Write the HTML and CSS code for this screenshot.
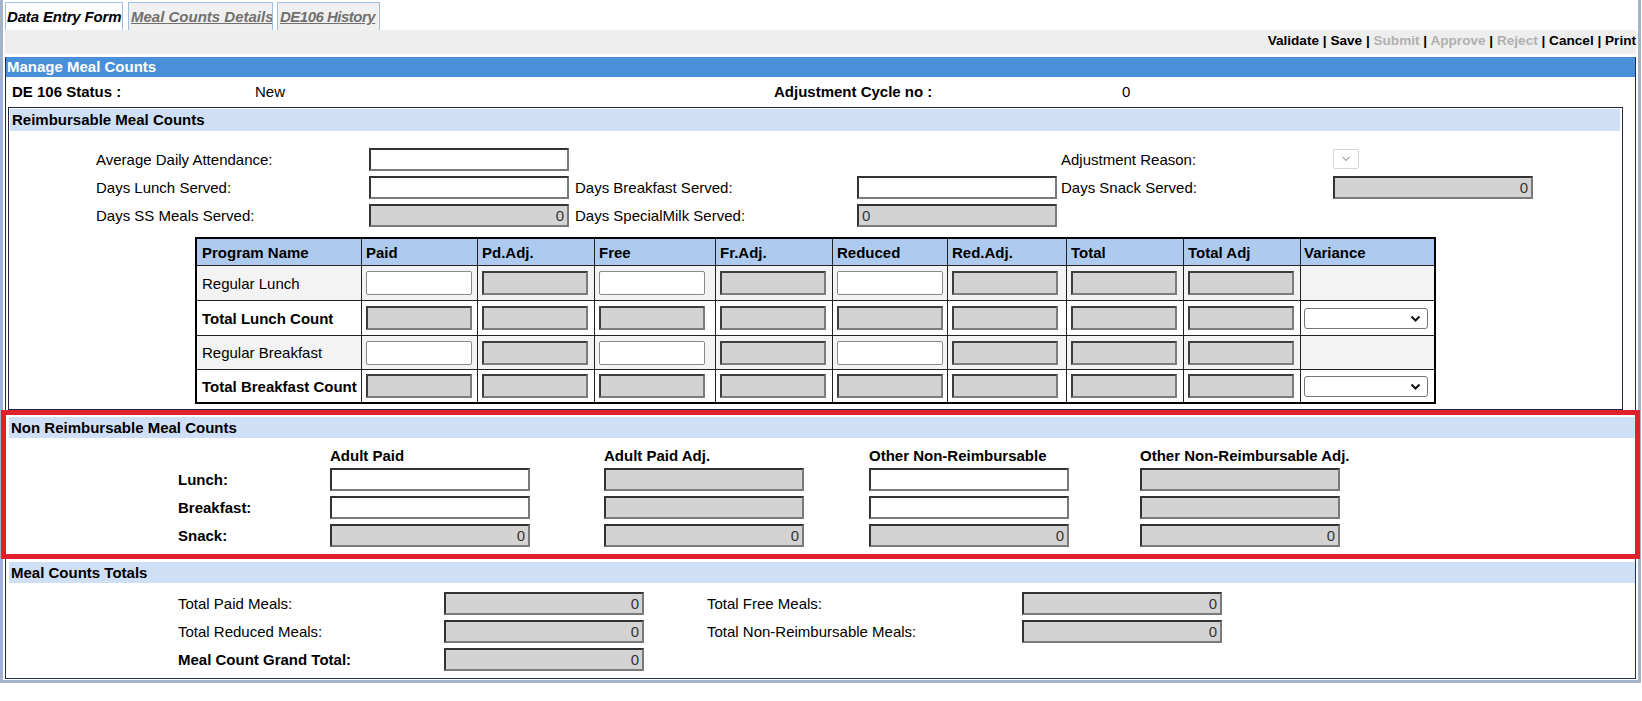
FILE: index.html
```html
<!DOCTYPE html>
<html>
<head>
<meta charset="utf-8">
<title>Manage Meal Counts</title>
<link rel="stylesheet" href="styles.css">
</head>
<body>
<div class="frame">
  <div class="tabs">
    <div class="tab active t1">Data Entry Form</div>
    <div class="tab t2">Meal Counts Details</div>
    <div class="tab t3">DE106 History</div>
  </div>
  <div class="toolbar"><span>Validate</span> | <span>Save</span> | <span class="dis">Submit</span> | <span class="dis">Approve</span> | <span class="dis">Reject</span> | <span>Cancel</span> | <span>Print</span></div>
  <div class="content">
    <div class="mainhead">Manage Meal Counts</div>
    <div class="status">
      <span class="b">DE 106 Status :</span>
      <span>New</span>
      <span class="b">Adjustment Cycle no :</span>
      <span>0</span>
    </div>

    <div class="box">
      <div class="sechead">Reimbursable Meal Counts</div>
      <div class="fields">
        <span>Average Daily Attendance:</span>
        <input class="in" type="text" value="">
        <span></span>
        <span></span>
        <span>Adjustment Reason:</span>
        <div class="minisel"><svg width="10" height="6" viewBox="0 0 10 6"><path d="M1.5 1 L5 4.5 L8.5 1" stroke="#a8a8a8" stroke-width="1.2" fill="none"/></svg></div>

        <span>Days Lunch Served:</span>
        <input class="in" type="text" value="">
        <span>Days Breakfast Served:</span>
        <input class="in" type="text" value="">
        <span>Days Snack Served:</span>
        <input class="in ro r" type="text" value="0" readonly>

        <span>Days SS Meals Served:</span>
        <input class="in ro r" type="text" value="0" readonly>
        <span>Days SpecialMilk Served:</span>
        <input class="in ro" type="text" value="0" readonly>
        <span></span>
        <span></span>
      </div>

      <table class="grid">
        <thead>
          <tr>
            <th>Program Name</th>
            <th>Paid</th>
            <th>Pd.Adj.</th>
            <th>Free</th>
            <th>Fr.Adj.</th>
            <th>Reduced</th>
            <th>Red.Adj.</th>
            <th>Total</th>
            <th>Total Adj</th>
            <th>Variance</th>
          </tr>
        </thead>
        <tbody>
          <tr class="alt">
            <td>Regular Lunch</td>
            <td><input class="ti" type="text"></td>
            <td><input class="ti ro" type="text" readonly></td>
            <td><input class="ti" type="text"></td>
            <td><input class="ti ro" type="text" readonly></td>
            <td><input class="ti" type="text"></td>
            <td><input class="ti ro" type="text" readonly></td>
            <td><input class="ti ro" type="text" readonly></td>
            <td><input class="ti ro" type="text" readonly></td>
            <td></td>
          </tr>
          <tr>
            <td class="b">Total Lunch Count</td>
            <td><input class="ti ro" type="text" readonly></td>
            <td><input class="ti ro" type="text" readonly></td>
            <td><input class="ti ro" type="text" readonly></td>
            <td><input class="ti ro" type="text" readonly></td>
            <td><input class="ti ro" type="text" readonly></td>
            <td><input class="ti ro" type="text" readonly></td>
            <td><input class="ti ro" type="text" readonly></td>
            <td><input class="ti ro" type="text" readonly></td>
            <td><div class="sel"><svg width="11" height="7" viewBox="0 0 11 7"><path d="M1.5 1.5 L5.5 5.5 L9.5 1.5" stroke="#111" stroke-width="2" fill="none"/></svg></div></td>
          </tr>
          <tr class="alt">
            <td>Regular Breakfast</td>
            <td><input class="ti" type="text"></td>
            <td><input class="ti ro" type="text" readonly></td>
            <td><input class="ti" type="text"></td>
            <td><input class="ti ro" type="text" readonly></td>
            <td><input class="ti" type="text"></td>
            <td><input class="ti ro" type="text" readonly></td>
            <td><input class="ti ro" type="text" readonly></td>
            <td><input class="ti ro" type="text" readonly></td>
            <td></td>
          </tr>
          <tr>
            <td class="b">Total Breakfast Count</td>
            <td><input class="ti ro" type="text" readonly></td>
            <td><input class="ti ro" type="text" readonly></td>
            <td><input class="ti ro" type="text" readonly></td>
            <td><input class="ti ro" type="text" readonly></td>
            <td><input class="ti ro" type="text" readonly></td>
            <td><input class="ti ro" type="text" readonly></td>
            <td><input class="ti ro" type="text" readonly></td>
            <td><input class="ti ro" type="text" readonly></td>
            <td><div class="sel"><svg width="11" height="7" viewBox="0 0 11 7"><path d="M1.5 1.5 L5.5 5.5 L9.5 1.5" stroke="#111" stroke-width="2" fill="none"/></svg></div></td>
          </tr>
        </tbody>
      </table>
    </div>

    <div class="sec nonreimb">
      <div class="sechead">Non Reimbursable Meal Counts</div>
      <div class="nrgrid">
        <span></span>
        <span class="b">Adult Paid</span>
        <span class="b">Adult Paid Adj.</span>
        <span class="b">Other Non-Reimbursable</span>
        <span class="b">Other Non-Reimbursable Adj.</span>

        <span class="b">Lunch:</span>
        <input class="in" type="text">
        <input class="in ro" type="text" readonly>
        <input class="in" type="text">
        <input class="in ro" type="text" readonly>

        <span class="b">Breakfast:</span>
        <input class="in" type="text">
        <input class="in ro" type="text" readonly>
        <input class="in" type="text">
        <input class="in ro" type="text" readonly>

        <span class="b">Snack:</span>
        <input class="in ro r" type="text" value="0" readonly>
        <input class="in ro r" type="text" value="0" readonly>
        <input class="in ro r" type="text" value="0" readonly>
        <input class="in ro r" type="text" value="0" readonly>
      </div>
    </div>

    <div class="sec totals">
      <div class="sechead">Meal Counts Totals</div>
      <div class="totgrid">
        <span>Total Paid Meals:</span>
        <input class="in ro r" type="text" value="0" readonly>
        <span>Total Free Meals:</span>
        <input class="in ro r" type="text" value="0" readonly>

        <span>Total Reduced Meals:</span>
        <input class="in ro r" type="text" value="0" readonly>
        <span>Total Non-Reimbursable Meals:</span>
        <input class="in ro r" type="text" value="0" readonly>

        <span class="b">Meal Count Grand Total:</span>
        <input class="in ro r" type="text" value="0" readonly>
        <span></span>
        <span></span>
      </div>
    </div>
  </div>
</div>
</body>
</html>
```

FILE: styles.css
```css
* { box-sizing: border-box; }

body {
  margin: 0;
  font-family: "Liberation Sans", Arial, sans-serif;
  font-size: 15px;
  color: #000;
  background: #fff;
}

.b { font-weight: bold; }

.frame {
  width: 1641px;
  border: 3px solid #a3b3c9;
  border-top: none;
  padding: 2px 2px 1px 2px;
}

/* tabs */
.tabs {
  display: flex;
  height: 28px;
}
.tab {
  height: 28px;
  line-height: 27px;
  padding: 0 0 0 2px;
  border: 1px solid #9fbfe2;
  border-bottom: none;
  background: #f0f0f0;
  color: #707070;
  font-weight: bold;
  font-style: italic;
  text-decoration: underline;
  white-space: nowrap;
  overflow: hidden;
}
.tab.active {
  background: #fff;
  color: #000;
  text-decoration: none;
  padding-left: 1px;
}
.tab.t1 { width: 118px; margin-right: 5px; letter-spacing: -0.15px; }
.tab.t2 { width: 145px; margin-right: 4px; }
.tab.t3 { width: 103px; letter-spacing: -0.5px; }

/* toolbar */
.toolbar {
  height: 24px;
  line-height: 22px;
  background: #eeeeee;
  text-align: right;
  font-weight: bold;
  font-size: 13.6px;
  white-space: nowrap;
}
.toolbar .dis { color: #b0b0b0; }

/* content */
.content {
  margin-top: 3px;
  border: 1px solid #1d2b5e;
  border-top: none;
}
.mainhead {
  background: #4a90d9;
  color: #fff;
  font-weight: bold;
  height: 20px;
  line-height: 20px;
  padding-left: 1px;
}
.status {
  display: grid;
  grid-template-columns: 243px 519px 348px 1fr;
  height: 30px;
  line-height: 30px;
  padding-left: 6px;
}

.sechead {
  background: #cfdff5;
  height: 22px;
  line-height: 22px;
  font-weight: bold;
  padding-left: 2px;
}

/* reimbursable box */
.box {
  margin: 0 12px 0 2px;
  border: 1px solid #22224a;
  padding: 1px 2px 5px 1px;
}
.fields {
  display: grid;
  grid-template-columns: 273px 206px 282px 204px 272px 200px;
  grid-auto-rows: 28px;
  align-items: center;
  margin: 14px 0 0 86px;
}
.fields > span { white-space: nowrap; }

.in {
  width: 200px;
  height: 23px;
  border: 2px solid;
  border-color: #333 #7a7a7a #7a7a7a #333;
  background: #fff;
  font-family: "Liberation Sans", Arial, sans-serif;
  font-size: 15px;
  color: #333;
  padding: 0 3px;
  margin: 0;
  outline: none;
}
.in.ro { background: #d3d3d3; }
.r { text-align: right; }

.minisel {
  width: 26px;
  height: 20px;
  border: 1px solid #d6d6d6;
  border-radius: 2px;
  display: flex;
  align-items: center;
  justify-content: center;
  background: #fff;
}

/* program table */
.grid {
  margin: 8px 0 0 185px;
  border-collapse: separate;
  border-spacing: 0;
  border: 2px solid #000;
  table-layout: fixed;
  width: 1241px;
}
.grid th,
.grid td {
  border-right: 1px solid #222;
  border-bottom: 1px solid #222;
  white-space: nowrap;
  overflow: hidden;
}
.grid th:last-child,
.grid td:last-child { border-right: none; }
.grid th {
  background: #aecbef;
  text-align: left;
  font-weight: bold;
  height: 27px;
  padding: 0 0 0 4px;
}
.grid th:nth-child(1) { width: 165px; padding-left: 5px; }
.grid th:nth-child(2) { width: 116px; }
.grid th:nth-child(3) { width: 117px; }
.grid th:nth-child(4) { width: 121px; }
.grid th:nth-child(5) { width: 117px; }
.grid th:nth-child(6) { width: 115px; }
.grid th:nth-child(7) { width: 119px; }
.grid th:nth-child(8) { width: 117px; }
.grid th:nth-child(9) { width: 117px; }
.grid th:nth-child(10) { width: 133px; padding-left: 3px; }

.grid td {
  height: 34px;
  padding: 0 4px;
  vertical-align: middle;
}
.grid tbody tr:nth-child(-n+2) td { height: 35px; }
.grid tbody tr:last-child td { height: 32px; border-bottom: none; }
.grid td:first-child { padding-left: 5px; }
.grid td:last-child { padding-left: 3px; }
.grid tr.alt td { background: #f3f3f3; }

.ti {
  display: block;
  width: 106px;
  height: 24px;
  border: 1px solid #8a8a8a;
  border-radius: 2px;
  background: #fff;
  margin: 0;
  padding: 0 3px;
  outline: none;
}
.ti.ro {
  background: #d3d3d3;
  border: 2px solid;
  border-color: #3e3e3e #7c7c7c #7c7c7c #3e3e3e;
  border-radius: 0;
}

.sel {
  width: 124px;
  height: 21px;
  border: 1px solid #767676;
  border-radius: 3px;
  background: #fff;
  display: flex;
  align-items: center;
  justify-content: flex-end;
  padding-right: 6px;
}

/* sections */
.sec {
  margin-top: 5px;
  padding: 2px 0 5px 3px;
}
.nonreimb {
  outline: 5px solid #e0202a;
}
.nonreimb .sechead { height: 21px; line-height: 21px; }
.nrgrid {
  display: grid;
  grid-template-columns: 152px 274px 265px 271px 200px;
  grid-template-rows: 20px 28px 28px 28px;
  align-items: center;
  margin: 7px 0 0 169px;
}
.nrgrid > span { white-space: nowrap; }

.totals { padding-top: 3px; padding-bottom: 5px; }
.totals .sechead { height: 21px; line-height: 21px; }
.totgrid {
  display: grid;
  grid-template-columns: 266px 263px 315px 200px;
  grid-auto-rows: 28px;
  align-items: center;
  margin: 6px 0 0 169px;
}
.totgrid > span { white-space: nowrap; }
```
